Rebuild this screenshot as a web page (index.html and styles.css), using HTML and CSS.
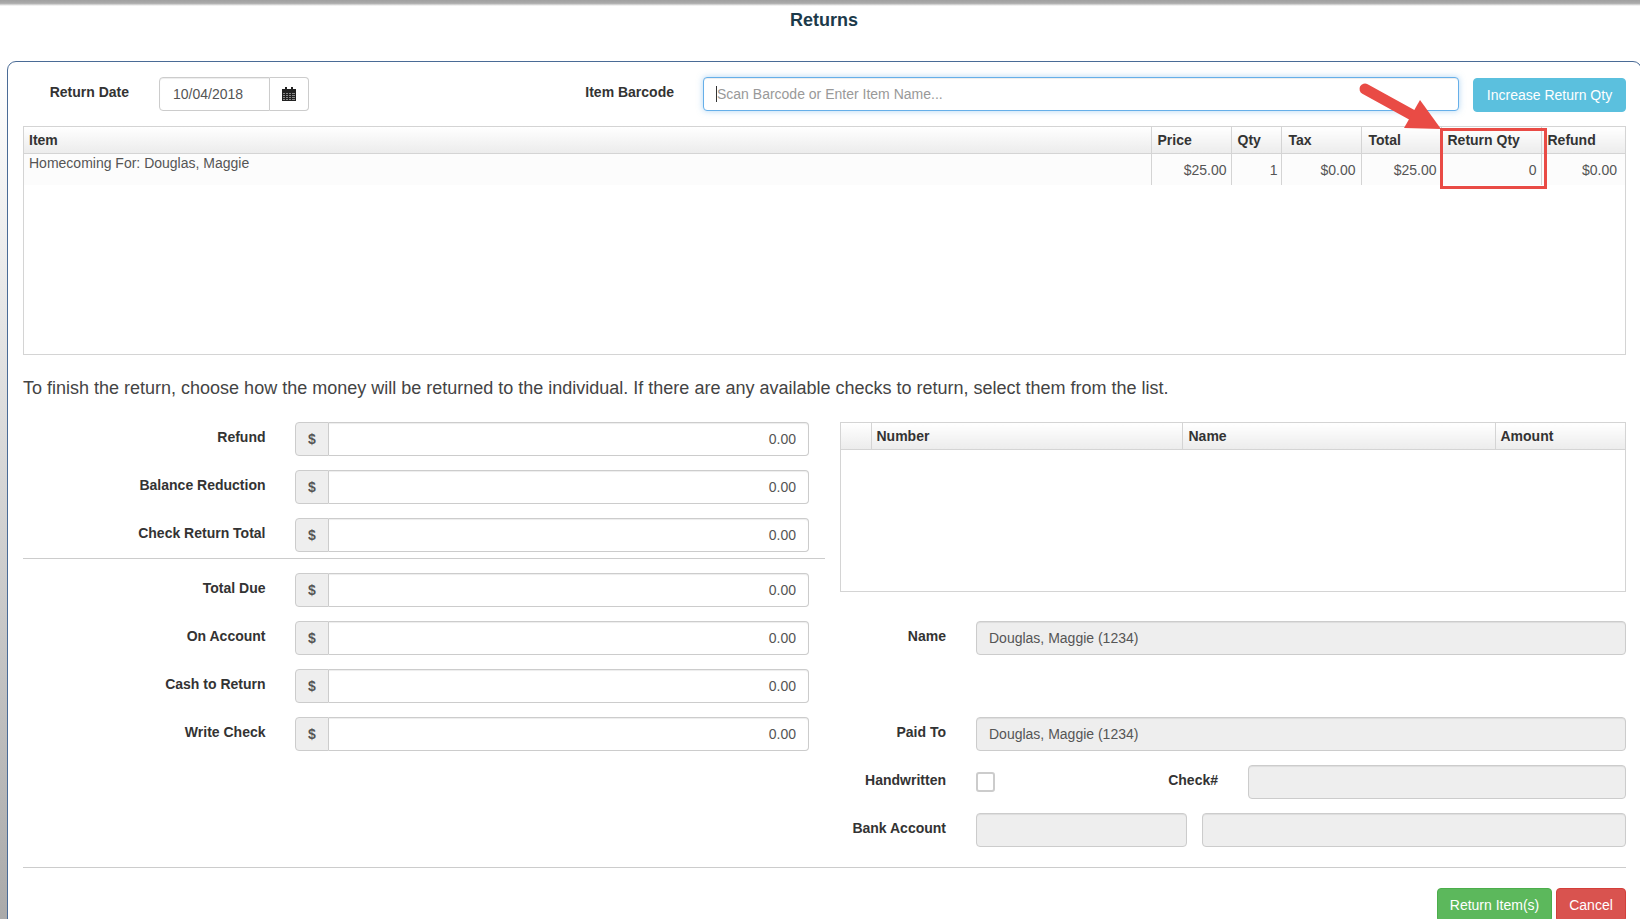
FILE: index.html
```html
<!DOCTYPE html>
<html lang="en">
<head>
<meta charset="utf-8">
<title>Returns</title>
<link rel="stylesheet" href="styles.css">
</head>
<body>
<div class="topbar"></div>
<h1 class="page-title">Returns</h1>
<main class="card">
  <div class="toolbar">
    <label class="tb-label date-label">Return Date</label>
    <div class="group date-group">
      <input class="ctl date-input" value="10/04/2018">
      <span class="cal-btn">
        <svg width="14" height="14" viewBox="0 0 14 14"><path d="M0 2h3V0h2v2h4V0h2v2h3v3H0z" fill="#222"/><rect y="5" width="14" height="9" fill="#222"/><g fill="#8a8a8a"><rect x="1" y="6" width="12" height="1"/><rect x="1" y="8" width="12" height="1"/><rect x="1" y="10" width="12" height="1"/><rect x="1" y="12" width="12" height="1"/></g><g fill="#222"><rect x="3" y="6" width="1" height="7"/><rect x="6" y="6" width="1" height="7"/><rect x="9" y="6" width="1" height="7"/></g></svg>
      </span>
    </div>
    <label class="tb-label barcode-label">Item Barcode</label>
    <div class="barcode-wrap">
      <input class="ctl barcode" placeholder="Scan Barcode or Enter Item Name...">
      <span class="caret"></span>
    </div>
    <button class="btn btn-info inc-btn">Increase Return Qty</button>
  </div>

  <div class="grid-box items-box">
    <table class="grid items">
      <colgroup><col class="c-item"><col class="c-price"><col class="c-qty"><col class="c-tax"><col class="c-total"><col class="c-rq"><col class="c-ref"></colgroup>
      <thead><tr><th>Item</th><th>Price</th><th>Qty</th><th class="th-wide">Tax</th><th class="th-wide">Total</th><th>Return Qty</th><th>Refund</th></tr></thead>
      <tbody><tr>
        <td class="item-cell">Homecoming For: Douglas, Maggie</td>
        <td class="num">$25.00</td><td class="num qty-cell">1</td><td class="num tax-cell">$0.00</td><td class="num">$25.00</td><td class="num">0</td><td class="num refund-cell">$0.00</td>
      </tr></tbody>
    </table>
  </div>

  <p class="intro">To finish the return, choose how the money will be returned to the individual. If there are any available checks to return, select them from the list.</p>

  <div class="columns">
    <section class="left">
      <div class="row"><label class="lbl">Refund</label><div class="group money"><span class="addon">$</span><input class="ctl amt" value="0.00"></div></div>
      <div class="row"><label class="lbl">Balance Reduction</label><div class="group money"><span class="addon">$</span><input class="ctl amt" value="0.00"></div></div>
      <div class="row"><label class="lbl">Check Return Total</label><div class="group money"><span class="addon">$</span><input class="ctl amt" value="0.00"></div></div>
      <hr class="rule sub-rule">
      <div class="row"><label class="lbl">Total Due</label><div class="group money"><span class="addon">$</span><input class="ctl amt" value="0.00"></div></div>
      <div class="row"><label class="lbl">On Account</label><div class="group money"><span class="addon">$</span><input class="ctl amt" value="0.00"></div></div>
      <div class="row"><label class="lbl">Cash to Return</label><div class="group money"><span class="addon">$</span><input class="ctl amt" value="0.00"></div></div>
      <div class="row"><label class="lbl">Write Check</label><div class="group money"><span class="addon">$</span><input class="ctl amt" value="0.00"></div></div>
    </section>
    <section class="right">
      <div class="grid-box checks-box">
        <table class="grid">
          <colgroup><col class="c-sel"><col class="c-num"><col class="c-name"><col class="c-amt"></colgroup>
          <thead><tr><th></th><th class="th-tight">Number</th><th>Name</th><th class="th-tight">Amount</th></tr></thead>
        </table>
      </div>
      <div class="rrow name-row"><label class="rlbl">Name</label><input class="ctl off grow" value="Douglas, Maggie (1234)" disabled></div>
      <div class="rrow paid-row"><label class="rlbl">Paid To</label><input class="ctl off grow" value="Douglas, Maggie (1234)" disabled></div>
      <div class="rrow"><label class="rlbl">Handwritten</label>
        <div class="check-cell"><input type="checkbox" class="chk"></div>
        <label class="check-lbl">Check#</label><input class="ctl off grow" disabled></div>
      <div class="rrow"><label class="rlbl">Bank Account</label><input class="ctl off bank1" disabled><input class="ctl off grow" disabled></div>
    </section>
  </div>

  <hr class="rule foot-rule">
  <div class="actions">
    <button class="btn btn-success ret-btn">Return Item(s)</button>
    <button class="btn btn-danger cancel-btn">Cancel</button>
  </div>
</main>

<svg class="annotation" width="1640" height="200" viewBox="0 0 1640 200" aria-hidden="true">
  <path d="M1365 89 L1414 116" stroke="#e94b45" stroke-width="11" stroke-linecap="round" fill="none"/>
  <path d="M1404 128 L1420 100 L1441 129 Z" fill="#e94b45"/>
  <rect x="1441.5" y="129.5" width="104" height="58" fill="none" stroke="#e94b45" stroke-width="3"/>
</svg>
</body>
</html>
```

FILE: styles.css
```css
* { box-sizing: border-box; }
html, body { margin: 0; height: 919px; overflow: hidden; }
body {
  position: relative;
  font-family: "Liberation Sans", Arial, sans-serif;
  font-size: 14px;
  color: #555;
  background: linear-gradient(180deg, #ffffff 0, #ffffff 60px, #aaaaaa 919px);
}
.topbar { height: 6px; background: linear-gradient(180deg, #a0a0a0 0, #acacac 55%, #fff 100%); }
.page-title {
  margin: 0;
  height: 55px;
  padding-top: 4px;
  padding-left: 8px;
  text-align: center;
  font-size: 18px;
  line-height: 20px;
  font-weight: bold;
  color: #1c3a4a;
}
.card {
  width: 1635px;
  height: 900px;
  margin-left: 7px;
  padding: 15px 15px 0;
  background: #fff;
  border: 1px solid #4a6b96;
  border-radius: 9px;
}
.ctl {
  display: block;
  height: 34px;
  padding: 0 12px;
  margin: 0;
  font: 14px "Liberation Sans", Arial, sans-serif;
  color: #555;
  background: #fff;
  border: 1px solid #ccc;
  border-radius: 4px;
  box-shadow: inset 0 1px 1px rgba(0,0,0,.075);
  outline: none;
}
.toolbar { display: flex; align-items: flex-start; height: 49px; }
.tb-label { font-weight: bold; color: #333; line-height: 20px; padding-top: 5px; text-align: right; }
.date-label { width: 106px; }
.date-group { margin-left: 30px; width: 150px; }
.group { display: flex; height: 34px; }
.date-input { width: 111px; flex: none; padding-left: 13px; border-radius: 4px 0 0 4px; }
.cal-btn {
  flex: 1;
  display: flex; align-items: center; justify-content: center;
  background: #fff;
  border: 1px solid #ccc; border-left: 0;
  border-radius: 0 4px 4px 0;
}
.barcode-label { flex: 1; }
.barcode-wrap { position: relative; margin-left: 29px; width: 756px; }
.barcode { width: 100%; padding-left: 13px; border-color: #66afe9; box-shadow: inset 0 1px 1px rgba(0,0,0,.075), 0 0 6px rgba(102,175,233,.5); }
.barcode::placeholder { color: #999; opacity: 1; }
.caret { position: absolute; left: 13px; top: 9px; width: 1px; height: 16px; background: #333; }
.btn {
  height: 34px;
  padding: 0;
  font: 14px "Liberation Sans", Arial, sans-serif;
  color: #fff;
  white-space: nowrap;
  border: 1px solid transparent;
  border-radius: 4px;
}
.btn-info { background: #5bc0de; border-color: #5bc0de; }
.btn-success { background: #5cb85c; border-color: #4cae4c; }
.btn-danger { background: #d9534f; border-color: #d43f3a; }
.inc-btn { width: 153px; margin-left: 14px; margin-top: 1px; }

.grid-box { border: 1px solid #d4d4d4; background: #fff; }
.items-box { width: 1603px; height: 229px; }
.checks-box { height: 170px; }
.grid { width: 100%; border-collapse: collapse; table-layout: fixed; }
.grid th {
  height: 26px;
  padding: 0 5px 0 6px;
  text-align: left;
  font-weight: bold;
  color: #333;
  background: linear-gradient(180deg, #ffffff 0, #ececec 100%);
  border-left: 1px solid #d4d4d4;
  border-bottom: 1px solid #d4d4d4;
}
.grid th:first-child { border-left: 0; padding-left: 5px; }
.grid th.th-wide { padding-left: 7px; }
.grid th.th-tight { padding-left: 5px; }
.grid td {
  height: 32px;
  padding: 0 5px;
  background: #fcfcfc;
  border-left: 1px solid #d4d4d4;
  color: #555;
}
.grid td.item-cell { border-left: 0; vertical-align: top; line-height: 18px; }
.grid td.num { text-align: right; padding-top: 2px; padding-right: 4px; }
.grid td.qty-cell { padding-right: 3px; }
.grid td.tax-cell { padding-right: 5px; }
.grid td.refund-cell { padding-right: 8px; }
.c-item { width: 1127px; } .c-price { width: 80px; } .c-qty { width: 50px; } .c-tax { width: 80px; }
.c-total { width: 80px; } .c-rq { width: 100px; }
.c-sel { width: 30px; } .c-num { width: 311px; } .c-name { width: 313px; }

.intro { margin: 0; height: 67px; padding-top: 23px; font-size: 18px; line-height: 20px; color: #444; }

.columns { display: grid; grid-template-columns: 802px 786px; column-gap: 15px; }
.row { display: flex; height: 34px; margin-bottom: 14px; }
.lbl { width: 242.5px; text-align: right; font-weight: bold; color: #333; line-height: 20px; padding-top: 5px; }
.money { width: 514px; margin-left: 29.5px; }
.addon {
  width: 34px; flex: none;
  display: flex; align-items: center; justify-content: center;
  font-weight: bold; color: #555;
  background: #eee;
  border: 1px solid #ccc;
  border-radius: 4px 0 0 4px;
}
.amt { flex: 1; min-width: 0; text-align: right; border-left: 0; border-radius: 0 4px 4px 0; }
.rule { margin: 0; border: 0; border-top: 1px solid #ccc; }
.sub-rule { margin: -8px 0 14px; }

.rrow { display: flex; align-items: flex-start; height: 34px; margin-bottom: 14px; }
.name-row { margin-top: 29px; margin-bottom: 62px; }
.paid-row { margin-bottom: 14px; }
.rlbl { width: 106px; flex: none; text-align: right; font-weight: bold; color: #333; line-height: 20px; padding-top: 5px; margin-right: 30px; }
.off { background: #eee; }
.grow { flex: 1; min-width: 0; }
.check-cell { width: 176px; flex: none; padding-top: 7px; }
.chk {
  appearance: none; -webkit-appearance: none;
  display: block; margin: 0; width: 19px; height: 20px;
  background: #fff; border: 2px solid #ccc; border-radius: 3px;
}
.check-lbl { width: 66px; flex: none; margin-right: 30px; text-align: right; font-weight: bold; color: #333; line-height: 20px; padding-top: 5px; }
.bank1 { width: 211px; flex: none; margin-right: 15px; }
.foot-rule { margin-top: 6px; width: 1603px; }
.actions { display: flex; justify-content: flex-end; gap: 4px; padding-top: 20px; width: 1603px; }
.ret-btn { width: 115px; }
.cancel-btn { width: 70px; }
.annotation { position: absolute; left: 0; top: 0; pointer-events: none; }
```
